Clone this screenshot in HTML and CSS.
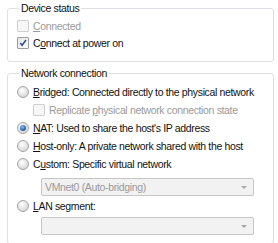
FILE: index.html
```html
<!DOCTYPE html>
<html lang="en">
<head>
  <meta charset="UTF-8">
  <title>Network Adapter</title>
  <link rel="stylesheet" href="styles.css">
</head>
<body>
  <fieldset class="group device">
    <legend>Device status</legend>
    <div class="row disabled"><span class="check"></span><span><u>C</u>onnected</span></div>
    <div class="row"><span class="check on"><svg viewBox="0 0 11 11"><path d="M2.5 5.5 L4.5 8 L8.8 2.2" /></svg></span><span>C<u>o</u>nnect at power on</span></div>
  </fieldset>

  <fieldset class="group network">
    <legend>Network connection</legend>
    <div class="row"><span class="radio"></span><span><u>B</u>ridged: Connected directly to the physical network</span></div>
    <div class="row sub disabled"><span class="check"></span><span>Replicate <u>p</u>hysical network connection state</span></div>
    <div class="row"><span class="radio on"></span><span><u>N</u>AT: Used to share the host's IP address</span></div>
    <div class="row"><span class="radio"></span><span><u>H</u>ost-only: A private network shared with the host</span></div>
    <div class="row"><span class="radio"></span><span>C<u>u</u>stom: Specific virtual network</span></div>
    <div class="select"><span>VMnet0 (Auto-bridging)</span><span class="arrow"></span></div>
    <div class="row"><span class="radio"></span><span><u>L</u>AN segment:</span></div>
    <div class="select"><span></span><span class="arrow"></span></div>
  </fieldset>
</body>
</html>
```

FILE: styles.css
```css
body { margin: 0; background: #fff; font-family: "Liberation Sans", Arial, sans-serif; font-size: 10.5px; letter-spacing: -0.35px; color: #111; }
u { text-decoration: underline; text-underline-offset: 1px; }
.group { margin: 2px 4px 0 7px; padding: 2px 0 10px 9px; border: 1px solid #dcdfe3; border-radius: 3px; }
.group legend { margin-left: 2px; padding: 0 2px; line-height: 13px; }
.network { margin-top: 5px; padding-top: 3px; padding-bottom: 8px; }
.row { display: flex; align-items: center; gap: 4px; height: 17px; white-space: nowrap; }
.network .row { height: 18px; }
.row.sub { padding-left: 16px; }
.disabled { color: #9a9a9a; }
.check { width: 10px; height: 10px; border: 1px solid #9c9c9c; border-radius: 1px; background: linear-gradient(135deg, #e6e6e6, #fbfbfb); display: flex; }
.disabled .check { border-color: #cfcfcf; background: #f6f6f6; }
.check svg { width: 10px; height: 10px; fill: none; stroke: #2b4a86; stroke-width: 1.6; }
.radio { width: 10px; height: 10px; border: 1px solid #a4a4a4; border-radius: 50%; background: radial-gradient(circle at 40% 35%, #ffffff 0, #e8e8e8 45%, #c9c9c9 100%); position: relative; }
.radio.on::after { content: ""; position: absolute; left: 2px; top: 2px; width: 6px; height: 6px; border-radius: 50%; background: radial-gradient(circle at 40% 35%, #8ec3f0 0, #2a6cb8 55%, #13407a 100%); }
.select { margin: 5px 0 0 24px; width: 208px; height: 16px; border: 1px solid #c6c6c6; border-radius: 2px; background: #f2f2f2; color: #9a9a9a; display: flex; align-items: center; justify-content: space-between; padding-left: 3px; }
.select + .row { margin-top: 1px; }
.row + .select:last-child { margin-top: 2px; }
.arrow { width: 0; height: 0; border-left: 3px solid transparent; border-right: 3px solid transparent; border-top: 3px solid #a8a8a8; margin-right: 6px; }
```
